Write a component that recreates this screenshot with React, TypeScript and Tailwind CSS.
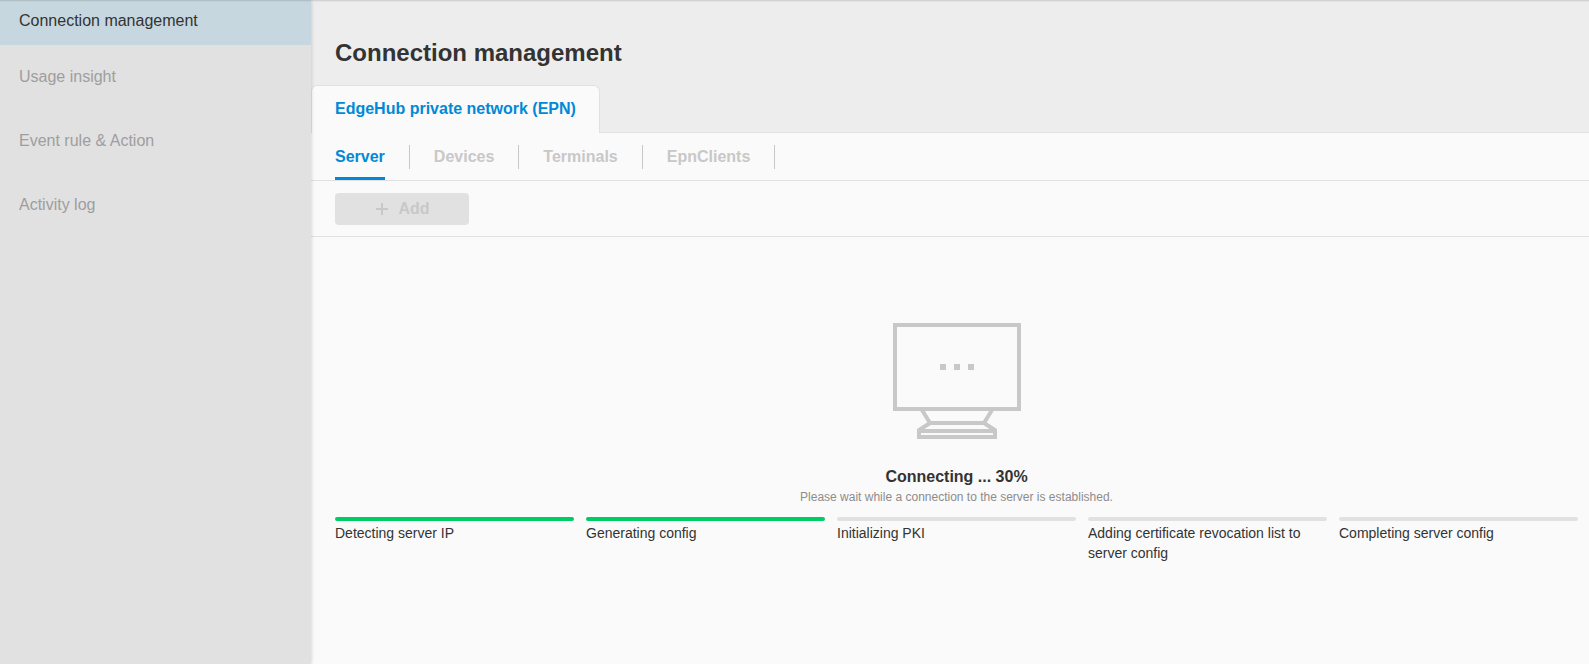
import { useState } from "react";

const navItems = ["Usage insight", "Event rule & Action", "Activity log"];

const subTabs = ["Server", "Devices", "Terminals", "EpnClients"];

// Server setup steps
const steps = [
  { label: "Detecting server IP", done: true },
  { label: "Generating config", done: true },
  { label: "Initializing PKI", done: false },
  { label: "Adding certificate revocation list to server config", done: false },
  { label: "Completing server config", done: false },
];

function MonitorIcon() {
  return (
    <svg width="128" height="116" viewBox="0 0 128 116" fill="none" stroke="#c8c8c8" strokeWidth="4" aria-hidden="true">
      <path d="M2 2H126V86H2Z" />
      <path d="M29 87L37 100L26 107V114H102V107L91 100L99 87" />
      <path d="M36 100H92M26 108H102" />
      <path d="M47 41h6v6h-6zM61 41h6v6h-6zM75 41h6v6h-6z" fill="#c8c8c8" stroke="none" />
    </svg>
  );
}

function PlusIcon() {
  return (
    <svg width="12" height="12" viewBox="0 0 12 12" stroke="currentColor" strokeWidth="2" aria-hidden="true">
      <path d="M6 0V12M0 6H12" />
    </svg>
  );
}

export default function App() {
  const [active, setActive] = useState("Server");
  const progress = 30;

  return (
    <div className="relative flex min-h-screen bg-[#fafafa] font-['Liberation_Sans',Arial,sans-serif] text-base text-[#333333]">
      {/* Shadow of the top bar */}
      <div className="pointer-events-none absolute inset-x-0 top-0 z-20 h-0.5 bg-gradient-to-b from-black/15 to-transparent" />

      {/* Sidebar */}
      <nav className="z-10 w-[311px] shrink-0 bg-[#e1e1e1] shadow-[0_0_4px_rgba(0,0,0,0.2)]">
        <a href="#connection" className="flex h-[45px] items-center bg-[#c7d7df] pb-1 pl-[19px]">
          Connection management
        </a>
        {navItems.map((item) => (
          <a key={item} href="#" className="flex h-16 items-center pl-[19px] text-[#9e9e9e]">
            {item}
          </a>
        ))}
      </nav>

      <main className="flex min-w-0 flex-1 flex-col">
        <header className="border-b border-[#e1e1e1] bg-[#ededed] pt-[37px]">
          <h1 className="pl-6 text-2xl leading-8 font-bold">Connection management</h1>
          <div className="mt-4 -mb-px flex">
            <button className="h-12 rounded-t-md border border-b-0 border-[#e1e1e1] bg-[#fafafa] px-[23px] pb-0.5 font-bold text-[#0089d6]">
              EdgeHub private network (EPN)
            </button>
          </div>
        </header>

        {/* Sub tabs */}
        <div className="flex h-12 items-center border-b border-[#e1e1e1] pl-6">
          {subTabs.map((tab) => (
            <div key={tab} className="mr-6 flex h-full items-center">
              <button
                onClick={() => setActive(tab)}
                className={`mr-6 h-full border-b-3 pt-[3px] font-bold ${
                  active === tab ? "border-[#0089d6] text-[#0089d6]" : "border-transparent text-[#c8c8c8]"
                }`}
              >
                {tab}
              </button>
              <span className="h-6 w-px bg-[#c8c8c8]" />
            </div>
          ))}
        </div>

        {/* Toolbar */}
        <div className="border-b border-[#e1e1e1] pt-3 pb-[11px] pl-6">
          <button
            disabled
            className="flex h-8 w-[134px] items-center justify-center gap-2.5 rounded bg-[#e1e1e1] pl-0.5 font-bold text-[#c8c8c8]"
          >
            <PlusIcon /> Add
          </button>
        </div>

        {/* Connection progress */}
        <section className="flex flex-col items-center pt-[86px] pr-[11px] pl-6">
          <MonitorIcon />
          <h2 className="mt-[26px] leading-6 font-bold">Connecting ... {progress}%</h2>
          <p className="text-xs leading-4 text-[#8c8c8c]">Please wait while a connection to the server is established.</p>
          <ol className="mt-3 grid w-full grid-cols-5 gap-3 text-sm">
            {steps.map((step) => (
              <li key={step.label}>
                <div className={`mb-0.5 h-1 rounded-full ${step.done ? "bg-[#00cc66]" : "bg-[#e1e1e1]"}`} />
                {step.label}
              </li>
            ))}
          </ol>
        </section>
      </main>
    </div>
  );
}
